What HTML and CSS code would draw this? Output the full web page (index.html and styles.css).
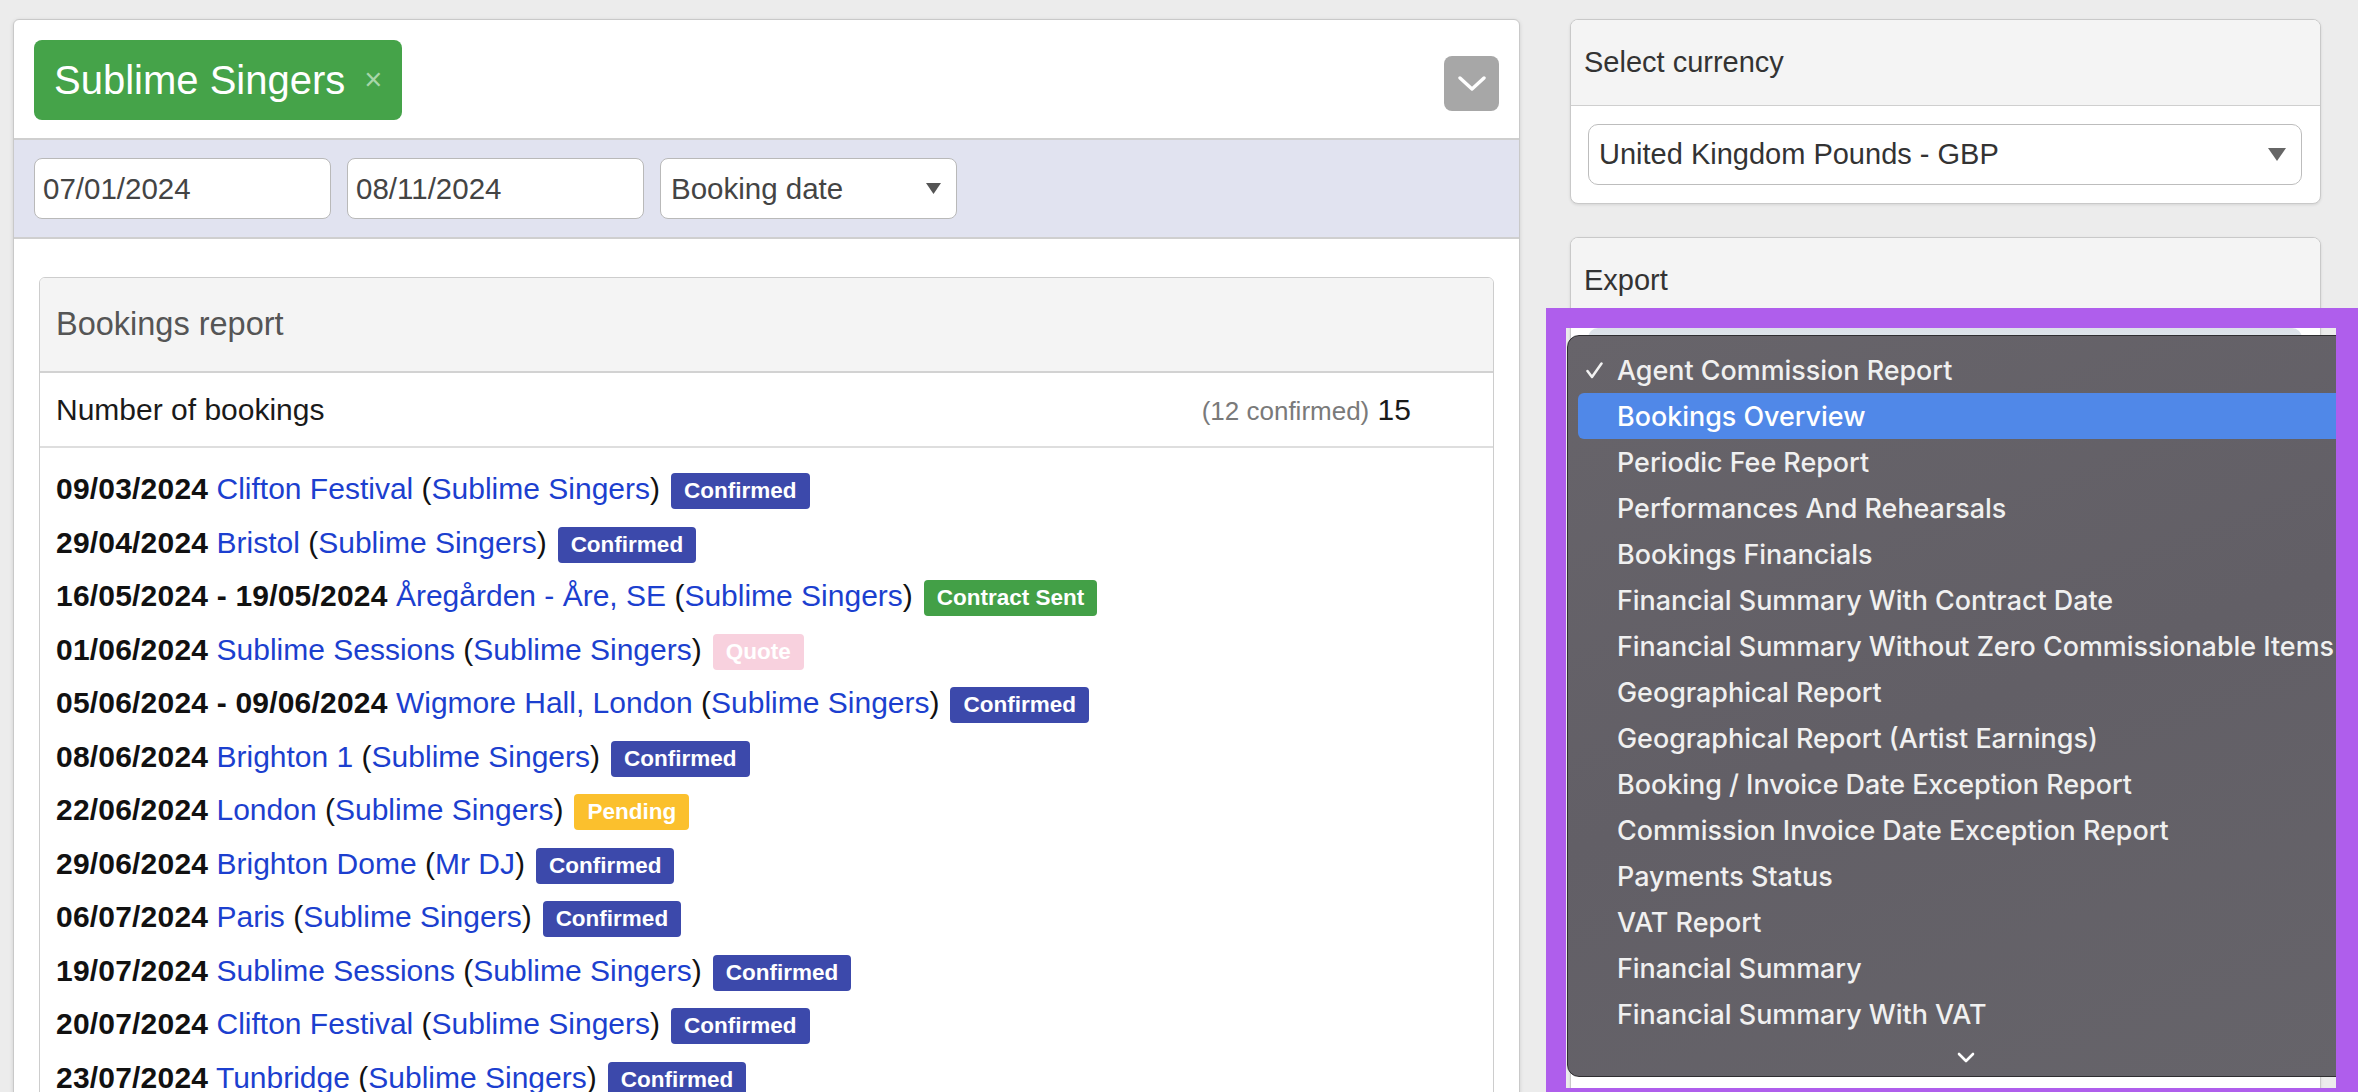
FILE: index.html
```html
<!DOCTYPE html>
<html lang="en">
<head>
<meta charset="utf-8">
<title>Bookings report</title>
<link rel="stylesheet" href="styles.css">
</head>
<body>
<div class="page">
  <section class="main-panel">
    <div class="panel-head">
      <span class="tag">Sublime Singers<span class="tag-x">×</span></span>
      <button class="toggle" type="button">
        <svg width="28" height="16" viewBox="0 0 28 16"><polyline points="2,2 14,13 26,2" fill="none" stroke="#fff" stroke-width="3.4" stroke-linecap="round" stroke-linejoin="round"/></svg>
      </button>
    </div>
    <div class="filters">
      <div class="field">07/01/2024</div>
      <div class="field">08/11/2024</div>
      <div class="field field-select">Booking date
        <svg width="15" height="11" viewBox="0 0 15 11"><polygon points="0,0 15,0 7.5,11" fill="#555"/></svg>
      </div>
    </div>
    <div class="content">
      <div class="report">
        <div class="report-head">Bookings report</div>
        <div class="report-count">
          <span>Number of bookings</span>
          <span class="count"><span class="muted">(12 confirmed)</span> 15</span>
        </div>
        <ul class="bookings">
          <li><b>09/03/2024</b> <a href="#">Clifton Festival</a> (<a href="#">Sublime Singers</a>)<span class="badge confirmed">Confirmed</span></li>
          <li><b>29/04/2024</b> <a href="#">Bristol</a> (<a href="#">Sublime Singers</a>)<span class="badge confirmed">Confirmed</span></li>
          <li><b>16/05/2024 - 19/05/2024</b> <a href="#">Åregården - Åre, SE</a> (<a href="#">Sublime Singers</a>)<span class="badge sent">Contract Sent</span></li>
          <li><b>01/06/2024</b> <a href="#">Sublime Sessions</a> (<a href="#">Sublime Singers</a>)<span class="badge quote">Quote</span></li>
          <li><b>05/06/2024 - 09/06/2024</b> <a href="#">Wigmore Hall, London</a> (<a href="#">Sublime Singers</a>)<span class="badge confirmed">Confirmed</span></li>
          <li><b>08/06/2024</b> <a href="#">Brighton 1</a> (<a href="#">Sublime Singers</a>)<span class="badge confirmed">Confirmed</span></li>
          <li><b>22/06/2024</b> <a href="#">London</a> (<a href="#">Sublime Singers</a>)<span class="badge pending">Pending</span></li>
          <li><b>29/06/2024</b> <a href="#">Brighton Dome</a> (<a href="#">Mr DJ</a>)<span class="badge confirmed">Confirmed</span></li>
          <li><b>06/07/2024</b> <a href="#">Paris</a> (<a href="#">Sublime Singers</a>)<span class="badge confirmed">Confirmed</span></li>
          <li><b>19/07/2024</b> <a href="#">Sublime Sessions</a> (<a href="#">Sublime Singers</a>)<span class="badge confirmed">Confirmed</span></li>
          <li><b>20/07/2024</b> <a href="#">Clifton Festival</a> (<a href="#">Sublime Singers</a>)<span class="badge confirmed">Confirmed</span></li>
          <li><b>23/07/2024</b> <a href="#">Tunbridge</a> (<a href="#">Sublime Singers</a>)<span class="badge confirmed">Confirmed</span></li>
        </ul>
      </div>
    </div>
  </section>

  <aside class="side">
    <div class="card">
      <div class="card-head">Select currency</div>
      <div class="card-body">
        <div class="currency">United Kingdom Pounds - GBP
          <svg width="18" height="13" viewBox="0 0 18 13"><polygon points="0,0 18,0 9,13" fill="#666"/></svg>
        </div>
      </div>
    </div>
    <div class="card export-card">
      <div class="card-head">Export</div>
      <div class="export-body"><div class="export-select"></div></div>
    </div>
  </aside>
</div>

<div class="menu">
  <div class="menu-item"><span class="check"><svg width="17" height="17" viewBox="0 0 17 17"><polyline points="1.5,9 6,15 15.5,1.5" fill="none" stroke="#f2f2f2" stroke-width="2.5" stroke-linecap="round" stroke-linejoin="round"/></svg></span>Agent Commission Report</div>
  <div class="menu-item active"><span class="check"></span>Bookings Overview</div>
  <div class="menu-item"><span class="check"></span>Periodic Fee Report</div>
  <div class="menu-item"><span class="check"></span>Performances And Rehearsals</div>
  <div class="menu-item"><span class="check"></span>Bookings Financials</div>
  <div class="menu-item"><span class="check"></span>Financial Summary With Contract Date</div>
  <div class="menu-item"><span class="check"></span>Financial Summary Without Zero Commissionable Items</div>
  <div class="menu-item"><span class="check"></span>Geographical Report</div>
  <div class="menu-item"><span class="check"></span>Geographical Report (Artist Earnings)</div>
  <div class="menu-item"><span class="check"></span>Booking / Invoice Date Exception Report</div>
  <div class="menu-item"><span class="check"></span>Commission Invoice Date Exception Report</div>
  <div class="menu-item"><span class="check"></span>Payments Status</div>
  <div class="menu-item"><span class="check"></span>VAT Report</div>
  <div class="menu-item"><span class="check"></span>Financial Summary</div>
  <div class="menu-item"><span class="check"></span>Financial Summary With VAT</div>
  <div class="menu-more">
    <svg width="18" height="11" viewBox="0 0 18 11"><polyline points="2,2 9,9 16,2" fill="none" stroke="#fff" stroke-width="2.6" stroke-linecap="round" stroke-linejoin="round"/></svg>
  </div>
</div>
<div class="focus-frame"></div>
</body>
</html>
```

FILE: styles.css
```css
html, body {
  margin: 0;
  height: 1092px;
  overflow: hidden;
}

body {
  position: relative;
  background: #ececec;
  font-family: "Liberation Sans", Arial, Helvetica, sans-serif;
  color: #111;
}

.page {
  display: flex;
  align-items: flex-start;
  gap: 50px;
  padding: 19px 0 0 13px;
}

/* ---------- main panel ---------- */
.main-panel {
  width: 1507px;
  box-sizing: border-box;
  background: #fff;
  border: 1px solid #c9c9c9;
  border-radius: 6px;
  box-shadow: 0 1px 4px rgba(0, 0, 0, 0.12);
}

.panel-head {
  display: flex;
  align-items: flex-start;
  justify-content: space-between;
  padding: 20px 20px 18px 20px;
  border-bottom: 2px solid #cfcfcf;
}

.tag {
  display: inline-flex;
  align-items: center;
  height: 80px;
  box-sizing: border-box;
  padding: 0 20px 0 20px;
  background: #45a349;
  color: #fff;
  font-size: 40px;
  border-radius: 8px;
}

.tag-x {
  font-size: 31px;
  color: #a8d6aa;
  margin-left: 19px;
}

.toggle {
  width: 55px;
  height: 55px;
  margin-top: 16px;
  padding: 0;
  border: 0;
  border-radius: 8px;
  background: #a7a7a7;
  display: flex;
  align-items: center;
  justify-content: center;
}

.filters {
  display: flex;
  gap: 16px;
  padding: 18px 20px;
  background: #e1e3f0;
  border-bottom: 2px solid #cfcfcf;
}

.field {
  width: 297px;
  height: 61px;
  box-sizing: border-box;
  background: #fff;
  border: 1px solid #b9b9b9;
  border-radius: 8px;
  padding-left: 8px;
  display: flex;
  align-items: center;
  font-size: 29.5px;
  color: #444;
}

.field-select {
  justify-content: space-between;
  padding: 0 15px 0 10px;
}

.content {
  padding: 38px 25px 0;
}

.report {
  border: 1px solid #cdcdcd;
  border-radius: 6px;
  overflow: hidden;
}

.report-head {
  height: 95px;
  box-sizing: border-box;
  background: #f4f4f4;
  border-bottom: 2px solid #d2d2d2;
  padding-left: 16px;
  display: flex;
  align-items: center;
  font-size: 32.5px;
  color: #555;
}

.report-count {
  height: 75px;
  box-sizing: border-box;
  border-bottom: 2px solid #dedede;
  padding: 0 82px 0 16px;
  display: flex;
  align-items: center;
  justify-content: space-between;
  font-size: 30px;
  color: #1a1a1a;
}

.muted {
  font-size: 26px;
  color: #7a7a7a;
}

.bookings {
  list-style: none;
  margin: 0;
  padding: 14px 16px 0;
}

.bookings li {
  height: 53.5px;
  line-height: 53.5px;
  font-size: 30px;
  white-space: nowrap;
  color: #111;
}

.bookings b {
  font-weight: bold;
  letter-spacing: 0.2px;
}

.bookings a {
  color: #1c3fcf;
  text-decoration: none;
}

.badge {
  display: inline-block;
  vertical-align: middle;
  position: relative;
  top: 0;
  margin-left: 11px;
  padding: 0 13px;
  line-height: 36px;
  font-size: 22.5px;
  font-weight: bold;
  color: #fff;
  border-radius: 4px;
}

.confirmed { background: #3c49ab; }
.sent { background: #43a047; }
.quote { background: #f8d1de; }
.pending { background: #fbc02d; }

/* ---------- side column ---------- */
.side {
  width: 751px;
  display: flex;
  flex-direction: column;
  gap: 33px;
}

.card {
  background: #fff;
  border: 1px solid #c9c9c9;
  border-radius: 8px;
  overflow: hidden;
  box-shadow: 0 1px 3px rgba(0, 0, 0, 0.1);
}

.card-head {
  height: 85px;
  background: #f4f4f4;
  border-bottom: 1px solid #cfcfcf;
  padding-left: 13px;
  display: flex;
  align-items: center;
  font-size: 29px;
  color: #333;
}

.card-body {
  padding: 18px 18px 18px 17px;
}

.currency {
  height: 61px;
  box-sizing: border-box;
  border: 1px solid #bdbdbd;
  border-radius: 10px;
  padding: 0 15px 0 10px;
  display: flex;
  align-items: center;
  justify-content: space-between;
  font-size: 29px;
  color: #333;
}

.export-body {
  padding: 4px 18px 0 17px;
  height: 900px;
}

.export-select {
  height: 61px;
  border-radius: 10px;
  background: linear-gradient(#dbe1e8, #f4f6f8);
}

/* ---------- open native menu ---------- */
.menu {
  position: absolute;
  left: 1567px;
  top: 335px;
  width: 797px;
  height: 742px;
  box-sizing: border-box;
  padding-top: 11px;
  background: linear-gradient(160deg, #67646a 0%, #625f66 50%, #66646a 100%);
  border: 1px solid #2f2e31;
  border-radius: 12px;
  font-family: Inter, "Noto Sans", sans-serif;
  font-size: 26.9px;
  font-weight: 500;
  color: #f0f0f0;
  z-index: 1;
}

.menu-item {
  height: 46px;
  margin: 0 10px;
  padding-left: 8px;
  display: flex;
  align-items: center;
  white-space: nowrap;
  border-radius: 6px;
}

.menu-item.active {
  background: #5088e8;
  color: #fff;
}

.check {
  width: 31px;
  flex: none;
  display: flex;
  align-items: center;
}

.menu-more {
  height: 40px;
  display: flex;
  align-items: center;
  justify-content: center;
}

.focus-frame {
  position: absolute;
  left: 1546px;
  top: 308px;
  width: 812px;
  height: 800px;
  box-sizing: border-box;
  border: 20px solid #af5eec;
  border-right-width: 22px;
  z-index: 2;
}
```
